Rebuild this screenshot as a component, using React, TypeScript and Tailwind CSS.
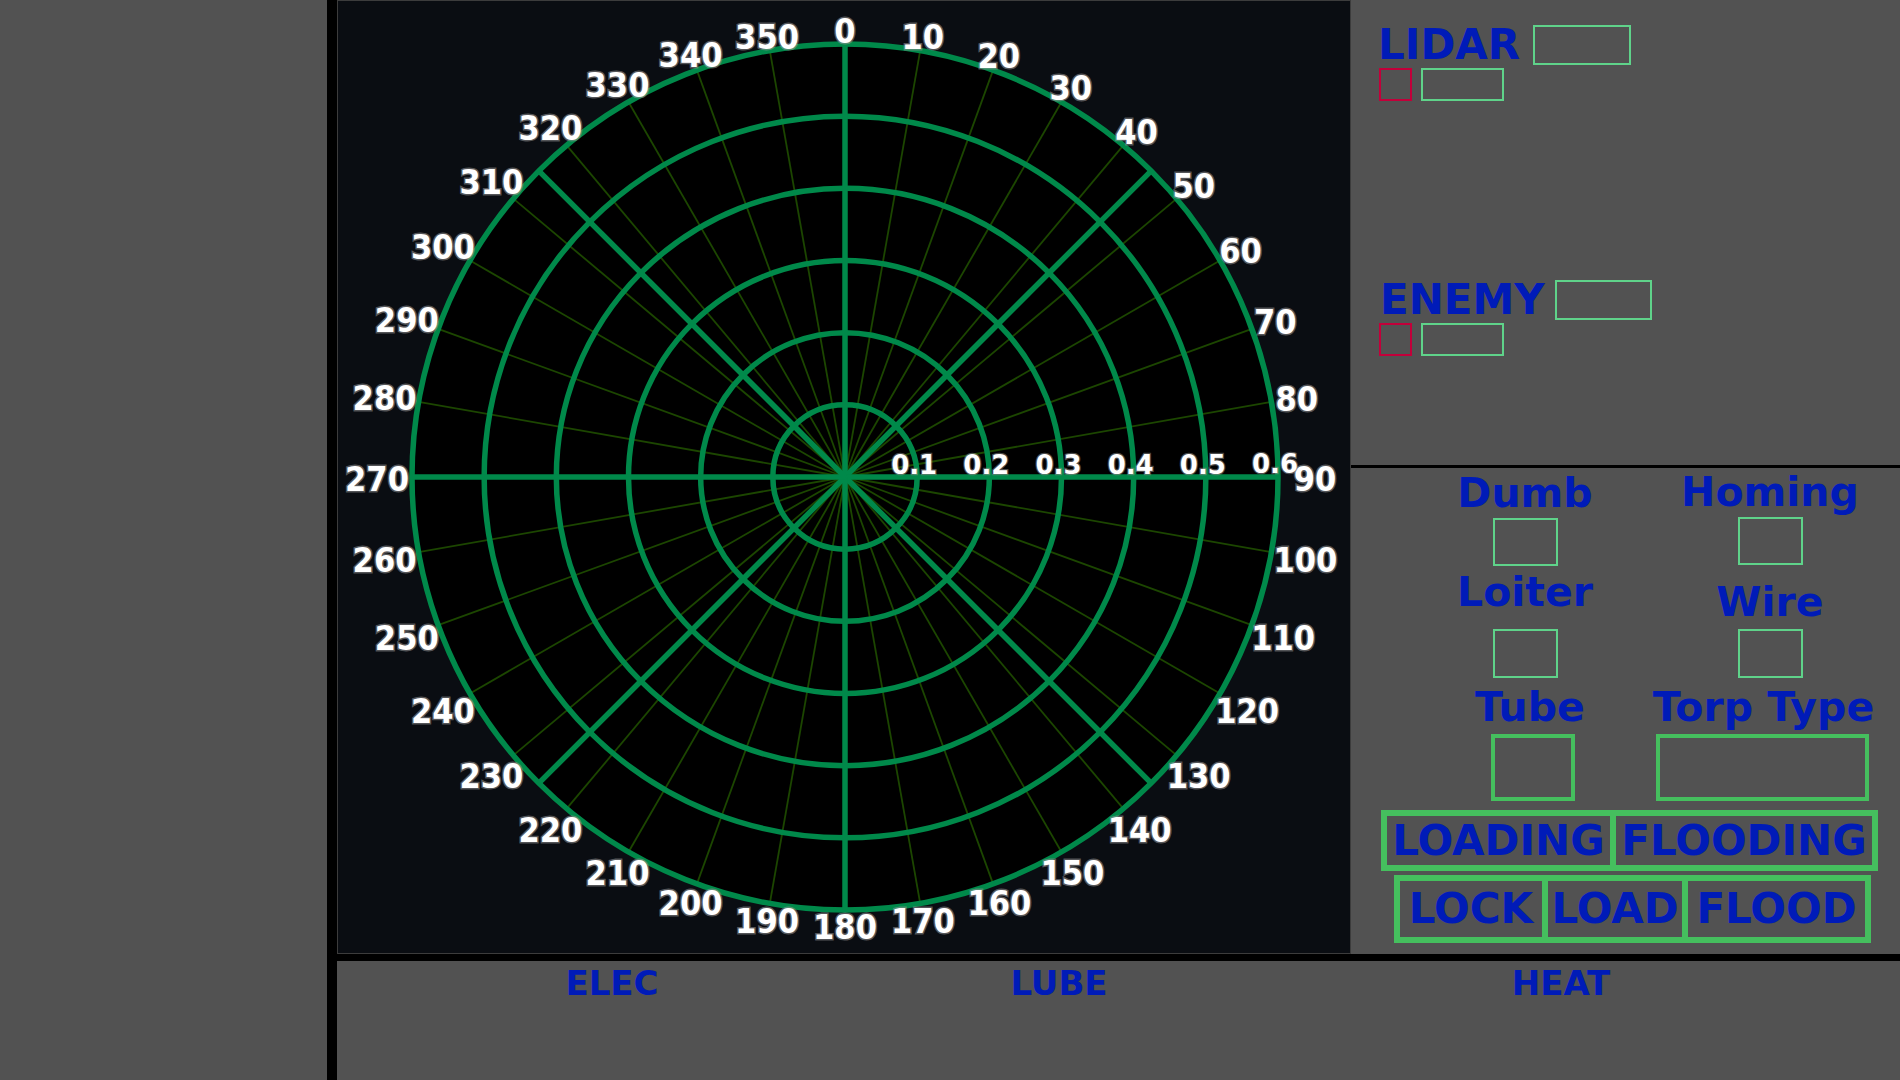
import React from 'react';

const GREEN = '#00894a';
const SPOKE = '#1c4600';
const CX = 507;
const CY = 476;
const R = 433;

const rad = (d: number) => (d * Math.PI) / 180;

// half width of a bearing label, by digit count
const halfWidth = (a: number) => {
  if (a === 90) return 35;
  if (a >= 100) return 33;
  if (a >= 10) return 24;
  return 10;
};

function Radar() {
  const step = R / 6;
  const tens = Array.from({ length: 36 }, (_, i) => i * 10);
  const heavy = [0, 45, 90, 135, 180, 225, 270, 315];

  return (
    <svg width={1012} height={952} className="block">
      <circle cx={CX} cy={CY} r={R} fill="#000" />

      {/* thin spokes every 10 degrees */}
      {tens
        .filter((a) => a % 90 !== 0)
        .map((a) => (
          <line
            key={`s${a}`}
            x1={CX}
            y1={CY}
            x2={CX + R * Math.sin(rad(a))}
            y2={CY - R * Math.cos(rad(a))}
            stroke={SPOKE}
            strokeWidth={1.8}
          />
        ))}

      {/* range rings */}
      {[1, 2, 3, 4, 5, 6].map((k) => (
        <circle key={`r${k}`} cx={CX} cy={CY} r={k * step} fill="none" stroke={GREEN} strokeWidth={5.5} />
      ))}

      {/* heavy spokes */}
      {heavy.map((a) => (
        <line
          key={`h${a}`}
          x1={CX}
          y1={CY}
          x2={CX + R * Math.sin(rad(a))}
          y2={CY - R * Math.cos(rad(a))}
          stroke={GREEN}
          strokeWidth={5.5}
        />
      ))}

      {/* bearing labels */}
      {tens.map((a) => {
        const s = Math.sin(rad(a));
        const c = Math.cos(rad(a));
        const rr = 435 + Math.hypot(halfWidth(a) * s, 13 * c);
        return (
          <text
            key={`t${a}`}
            x={CX + rr * s}
            y={CY - rr * c + 14}
            textAnchor="middle"
            fontSize={34}
            fontWeight={700}
            fontStretch="condensed"
            fontFamily="'DejaVu Sans Condensed', 'DejaVu Sans', sans-serif"
            fill="#fff"
            stroke="rgba(150,150,150,0.55)"
            strokeWidth={3}
            paintOrder="stroke"
          >
            {a}
          </text>
        );
      })}

      {/* range labels */}
      {[1, 2, 3, 4, 5, 6].map((k) => (
        <text
          key={`l${k}`}
          x={CX + k * step - 3}
          y={k === 6 ? 472 : 473}
          textAnchor="middle"
          fontSize={26}
          fontWeight={700}
          fontFamily="'DejaVu Sans', sans-serif"
          fill="#fff"
          stroke="rgba(150,150,150,0.5)"
          strokeWidth={2.5}
          paintOrder="stroke"
        >
          {`0.${k}`}
        </text>
      ))}
    </svg>
  );
}

function SmallBox({ red, w }: { red?: boolean; w: string }) {
  return <div className={`${w} h-[33px] border-2 ${red ? 'border-[#c3003a]' : 'border-[#5fd38a]'}`} />;
}

function TargetBlock({ label, boxClass, mt, ml }: { label: string; boxClass: string; mt: string; ml: string }) {
  return (
    <div className={mt}>
      <div className={`flex items-center ${ml}`}>
        <span className="text-[42px] leading-none font-bold text-[#001bb8]">{label}</span>
        <div className={`${boxClass} h-[40px] border-2 border-[#5fd38a]`} />
      </div>
      <div className="mt-[2px] ml-[28px] flex gap-[9px]">
        <SmallBox red w="w-[33px]" />
        <SmallBox w="w-[83px]" />
      </div>
    </div>
  );
}

function Cell({ text, w }: { text: string; w: string }) {
  return (
    <div className={`${w} flex items-center justify-center border-[3px] border-[#45bf5e]`}>
      <span className="text-[42px] leading-none font-bold text-[#001bb8]">{text}</span>
    </div>
  );
}

function TorpedoPanel() {
  const label = 'text-[41px] leading-none font-bold text-[#001bb8]';
  const box = 'w-[65px] border-2 border-[#5fd38a]';
  return (
    <div className="flex-1">
      <div className="flex pl-[74px] gap-[25px]">
        <div className="w-[200px] flex flex-col items-center">
          <span className={`${label} mt-[5px]`}>Dumb</span>
          <div className={`${box} h-[48px] mt-[4px]`} />
          <span className={`${label} mt-[6px]`}>Loiter</span>
          <div className={`${box} h-[49px] mt-[16px]`} />
          <span className={`${label} mt-[9px] ml-[10px]`}>Tube</span>
          <div className="w-[84px] h-[67px] mt-[6px] ml-[16px] border-4 border-[#45bf5e]" />
        </div>
        <div className="w-[240px] flex flex-col items-center">
          <span className={`${label} mt-[4px]`}>Homing</span>
          <div className={`${box} h-[48px] mt-[4px]`} />
          <span className={`${label} mt-[17px]`}>Wire</span>
          <div className={`${box} h-[49px] mt-[6px]`} />
          <span className={`${label} mt-[9px] mr-[13px] whitespace-nowrap`}>Torp Type</span>
          <div className="w-[213px] h-[67px] mt-[6px] mr-[15px] border-4 border-[#45bf5e]" />
        </div>
      </div>

      <div className="mt-[9px] ml-[30px] flex w-fit h-[61px] border-[3px] border-[#45bf5e]">
        <Cell text="LOADING" w="w-[229px]" />
        <Cell text="FLOODING" w="w-[262px]" />
      </div>
      <div className="mt-[4px] ml-[43px] flex w-fit h-[68px] border-[3px] border-[#45bf5e]">
        <Cell text="LOCK" w="w-[148px]" />
        <Cell text="LOAD" w="w-[140px]" />
        <Cell text="FLOOD" w="w-[183px]" />
      </div>
    </div>
  );
}

export default function App() {
  return (
    <div className="flex h-[1080px] w-[1900px] overflow-hidden bg-[#525252] font-['DejaVu_Sans']">
      <div className="w-[327px] shrink-0 bg-[#525252]" />
      <div className="w-[10px] shrink-0 bg-black" />

      <div className="flex flex-1 flex-col">
        <div className="flex h-[954px]">
          <div className="w-[1014px] shrink-0 border border-[#3c3c3c] bg-[#0a0d12]">
            <Radar />
          </div>

          <div className="flex flex-1 flex-col">
            <div className="h-[465px] pt-[24px]">
              <TargetBlock label="LIDAR" boxClass="ml-[13px] w-[98px]" mt="" ml="ml-[27px]" />
              <TargetBlock label="ENEMY" boxClass="ml-[10px] w-[97px]" mt="mt-[178px]" ml="ml-[29px]" />
            </div>
            <div className="h-[3px] bg-black" />
            <TorpedoPanel />
          </div>
        </div>

        <div className="h-[7px] bg-black" />

        <div className="flex flex-1 pt-[5px] text-[34px] leading-none font-bold text-[#001bb8]">
          <div className="ml-[175px] w-[200px] text-center">ELEC</div>
          <div className="ml-[247px] w-[200px] text-center">LUBE</div>
          <div className="ml-[302px] w-[200px] text-center">HEAT</div>
        </div>
      </div>
    </div>
  );
}
